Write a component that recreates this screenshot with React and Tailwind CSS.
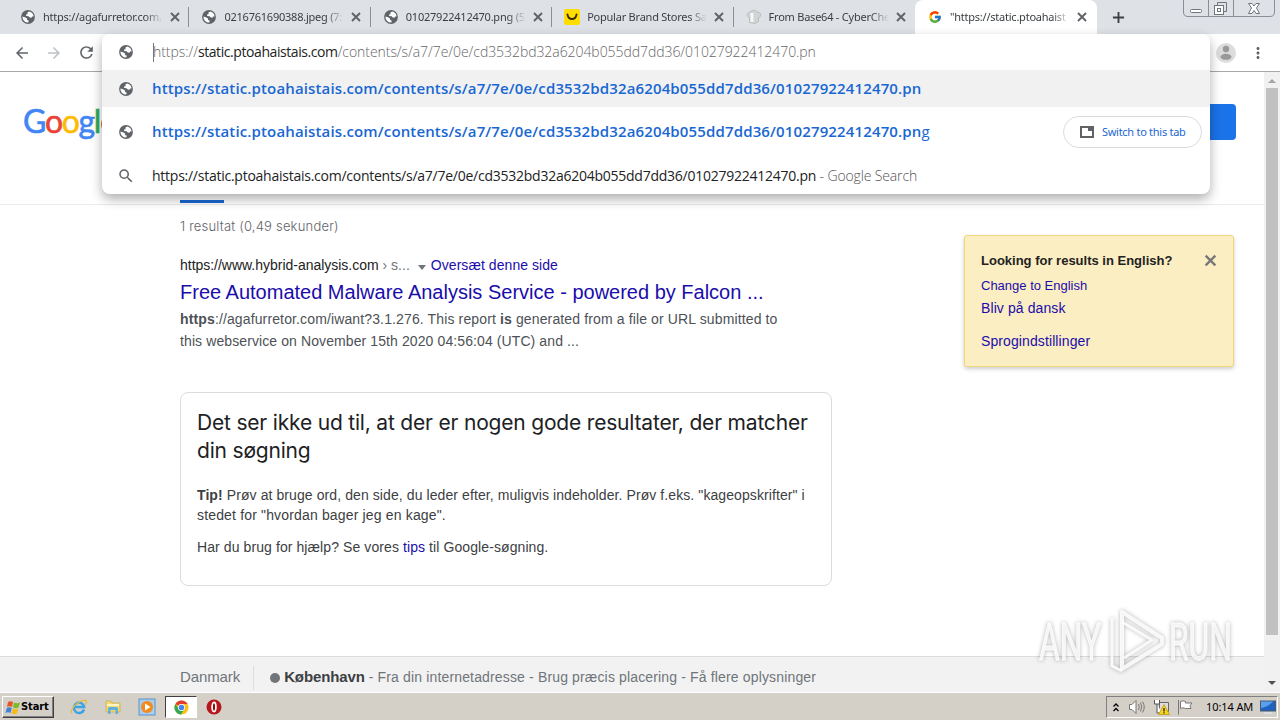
import React from 'react';
import { MdArrowBack, MdArrowForward, MdRefresh, MdSearch, MdMoreVert } from 'react-icons/md';
import { FcGoogle } from 'react-icons/fc';

const URL_HOST = 'static.ptoahaistais.com';
const URL_PATH = '/contents/s/a7/7e/0e/cd3532bd32a6204b055dd7dd36/01027922412470.pn';

const GlobeIcon = ({ className }) => (
  <svg viewBox="0 0 14 14" className={className}>
    <circle cx="7" cy="7" r="6.9" fill="#5f6368" />
    <path d="M8.2 1.4 L6.4 2.6 6.6 4.2 5 4.6 5.2 6 7.6 6.2 8.8 7.6 10.6 7.8 11 6.4 12.6 6.6 A5.7 5.7 0 0 0 8.2 1.4Z M1.4 6.6 L4.6 7.4 6.2 8.8 6 10 7.6 10.4 7.4 12.6 A5.7 5.7 0 0 1 1.4 6.6Z" fill="#fff" />
  </svg>
);

const CrossIcon = ({ className }) => (
  <svg viewBox="0 0 14 14" className={className} fill="none" stroke="currentColor" strokeWidth="1.9">
    <path d="M3 3 L11 11 M11 3 L3 11" />
  </svg>
);

const PlusIcon = ({ className }) => (
  <svg viewBox="0 0 14 14" className={className} fill="none" stroke="currentColor" strokeWidth="2">
    <path d="M7 1 V13 M1 7 H13" />
  </svg>
);

const AliIcon = () => (
  <svg viewBox="0 0 16 16" className="w-4 h-4">
    <rect width="16" height="16" rx="2" fill="#fd0" />
    <path d="M3.5 5.5 C4.5 11.5 11.5 11.5 12.5 5.5" fill="none" stroke="#3a2a00" strokeWidth="1.8" strokeLinecap="round" />
  </svg>
);

const ChefIcon = () => (
  <svg viewBox="0 0 16 16" className="w-4 h-4">
    <path d="M3.5 13.5 V8.5 C0 8 .5 3 4 3.2 C5.5 .8 10 .8 11 3 C15.5 2.5 15.8 8 12.5 8.8 V12.5 L9 14.5Z" fill="#d2d3d5" stroke="#b5b5b5" strokeWidth=".8" />
    <path d="M6 4 V13" stroke="#f7f7f7" strokeWidth="3" />
  </svg>
);

const tabs = [
  { title: 'https://agafurretor.com,', icon: <GlobeIcon className="w-3.5 h-3.5" /> },
  { title: '0216761690388.jpeg (7:', icon: <GlobeIcon className="w-3.5 h-3.5" /> },
  { title: '01027922412470.png (5', icon: <GlobeIcon className="w-3.5 h-3.5" /> },
  { title: 'Popular Brand Stores Sa', icon: <AliIcon /> },
  { title: 'From Base64 - CyberChe', icon: <ChefIcon /> },
  { title: '"https://static.ptoahaist', icon: <FcGoogle className="w-3.5 h-3.5" />, active: true },
];

const Tab = ({ tab, last }) => (
  <div className={tab.active
    ? 'flex h-[34px] w-[182px] items-center rounded-t-lg bg-white pl-3'
    : 'flex h-[34px] w-[181.4px] items-center pl-3'}>
    <span className="flex w-4 shrink-0 justify-center">{tab.icon}</span>
    <span className="ml-[7px] w-[120px] overflow-hidden whitespace-nowrap text-[11px] leading-4 tracking-[-0.23px] text-[#3c4043] mask-r-from-85%">
      {tab.title}
    </span>
    <CrossIcon className="ml-[5px] h-3.5 w-3.5 shrink-0 text-[#5f6368]" />
    {!tab.active && !last && <span className="ml-auto h-[20px] w-px bg-[#8b8e93]" />}
  </div>
);

const WindowButtons = () => (
  <svg viewBox="0 0 94 18" className="ml-auto mr-1 h-[18px] w-[94px] self-start" fill="none" stroke="#8b8f95">
    <path d="M1.5 -1 V12 Q1.5 16.500 6 16.500 H88 Q92.500 16.500 92.500 12 V-1 M26.500 0 V16 M51.500 0 V16" />
    <rect x="8.500" y="9.500" width="11" height="3" rx="1" fill="#fff" stroke="#70757a" />
    <path d="M35.500 5.500 V2.500 H44.500 V11.500 H41.500" stroke="#70757a" />
    <rect x="32.500" y="5.500" width="9" height="9" stroke="#70757a" fill="#fff" />
    <rect x="35.500" y="8.500" width="3" height="3" stroke="#70757a" />
    <path d="M66.500 3.500 H70 L72 6 74 3.500 H77.500 L74.500 8 77.500 13.500 H74 L72 10.500 70 13.500 H66.500 L69.500 8Z" stroke="#70757a" fill="#fff" />
  </svg>
);

const Omnibox = () => (
  <div className="absolute left-[102px] top-[34px] z-10 h-[160px] w-[1108px] rounded-lg bg-white font-['Open_Sans',sans-serif] text-[14px] shadow-[0_5px_12px_rgba(0,0,0,0.32)]">
    <div className="flex h-9 items-center pl-[17px]">
      <GlobeIcon className="h-3.5 w-3.5" />
      <span className="ml-[20px] h-[19px] w-px bg-[#777]" />
      <span className="-ml-px mb-[2px] whitespace-nowrap font-light tracking-[-0.06px] text-[#666]">
        https://<span className="font-normal tracking-[-0.42px] text-[#222]">{URL_HOST}</span>{URL_PATH}
      </span>
    </div>
    <div className="flex h-[37px] items-center bg-[#f1f1f1] pl-[17px]">
      <GlobeIcon className="h-3.5 w-3.5" />
      <span className="ml-[19px] whitespace-nowrap text-[15px] font-semibold tracking-[0.14px] text-[#1967d2]">https://{URL_HOST}{URL_PATH}</span>
    </div>
    <div className="flex h-[50px] items-center pl-[17px] pr-[8px]">
      <GlobeIcon className="h-3.5 w-3.5" />
      <span className="mb-px ml-[19px] whitespace-nowrap text-[15px] font-semibold tracking-[0.14px] text-[#1967d2]">
        https://{URL_HOST}{URL_PATH}<span className="font-normal">g</span>
      </span>
      <button className="ml-auto flex h-8 w-[139px] items-center rounded-full border border-[#dadce0] pl-4 font-['Noto_Sans',sans-serif] text-[11px] text-[#1967d2]">
        <svg viewBox="0 0 14 12" className="mr-2 h-3 w-3.5">
          <path d="M1 1 H13 V11 H1Z" fill="none" stroke="#5f6368" strokeWidth="2" />
          <path d="M8 1 H13 V5 H8Z" fill="#5f6368" />
        </svg>
        <span className="whitespace-nowrap tracking-[-0.28px]">Switch to this tab</span>
      </button>
    </div>
    <div className="flex h-[37px] items-center pl-[15px]">
      <MdSearch className="h-[18px] w-[18px] text-[#5f6368]" />
      <span className="ml-[17px] whitespace-nowrap tracking-[-0.25px] text-[#222]">
        https://{URL_HOST}{URL_PATH}<span className="font-light tracking-[-0.14px] text-[#555]"> - Google Search</span>
      </span>
    </div>
  </div>
);

const LanguageBox = () => (
  <aside className="mr-[30px] mt-[30px] h-[132px] w-[270px] rounded-[3px] border border-[#f0d87a] bg-[#fceec3] px-4 pt-[15px] text-[14px] text-[#1a0dab] shadow-[0_2px_4px_rgba(0,0,0,0.2)]">
    <div className="flex h-[20px] items-center justify-between">
      <b className="whitespace-nowrap text-[13px] text-[#222]">Looking for results in English?</b>
      <CrossIcon className="-mr-[2px] mb-[2px] h-[17px] w-[17px] text-[#777]" />
    </div>
    <p className="mt-[3px] text-[13px] leading-[23px]">Change to English</p>
    <p className="leading-[23px] tracking-[0.1px]">Bliv på dansk</p>
    <p className="mt-[10px] leading-[23px] tracking-[0.1px]">Sprogindstillinger</p>
  </aside>
);

const Results = () => (
  <div className="w-[652px] pt-[11px]">
    <p className="font-['Inter',sans-serif] text-[13px] font-light leading-5 tracking-[0.2px] text-[#5f6368]">1 resultat (0,49 sekunder)</p>
    <p className="mt-[19px] flex items-center whitespace-nowrap text-[14px] leading-5 text-[#222]">
      <span className="tracking-[-0.02px]">https://www.hybrid-analysis.com</span>
      <span className="ml-1 text-[#70757a]">› s...</span>
      <span className="ml-2 mt-1 border-x-4 border-t-[5px] border-x-transparent border-t-[#70757a]" />
      <span className="ml-[5px] tracking-[0.06px] text-[#1a0dab]">Oversæt denne side</span>
    </p>
    <h3 className="mt-1 whitespace-nowrap text-[20px] leading-[26px] text-[#1a0dab]">
      Free Automated Malware Analysis Service - powered by Falcon ...
    </h3>
    <p className="mt-[3px] whitespace-nowrap text-[14px] leading-[22px] tracking-[0.13px] text-[#4d5156]">
      <b>https</b>://agafurretor.com/iwant?3.1.276. This report <b>is</b> generated from a file or URL submitted to<br />
      <span className="tracking-[0.1px]">this webservice on November 15th 2020 04:56:04 (UTC) and ...</span>
    </p>
    <div className="mt-10 h-[194px] rounded-lg border border-[#dadce0] p-4 text-[14px] leading-5 text-[#3c4043]">
      <h2 className="whitespace-nowrap font-['Inter',sans-serif] text-[21px] leading-7 tracking-[-0.19px] text-[#202124]">
        Det ser ikke ud til, at der er nogen gode resultater, der matcher<br />din søgning
      </h2>
      <p className="mt-5 whitespace-nowrap tracking-[0.09px]">
        <b>Tip!</b> Prøv at bruge ord, den side, du leder efter, muligvis indeholder. Prøv f.eks. "kageopskrifter" i<br />
        <span className="tracking-[0.16px]">stedet for "hvordan bager jeg en kage".</span>
      </p>
      <p className="mt-3 whitespace-nowrap tracking-[0.09px]">Har du brug for hjælp? Se vores <span className="text-[#1a0dab]">tips</span> til Google-søgning.</p>
    </div>
  </div>
);

const Scrollbar = () => (
  <div className="flex w-4 flex-col items-center bg-[#f1f1f1]">
    <span className="mt-[7px] border-x-4 border-b-[4px] border-x-transparent border-b-[#a3a3a3]" />
    <span className="mt-[5px] h-[547px] w-3 bg-[#c1c1c1]" />
    <span className="mb-[7px] mt-auto border-x-4 border-t-[4px] border-x-transparent border-t-[#505050]" />
  </div>
);

const Watermark = () => (
  <svg viewBox="0 0 200 72" className="absolute left-[1036px] top-[606px] z-10 h-[72px] w-[200px] overflow-visible drop-shadow-[0_0_2px_rgba(0,0,0,0.35)]">
    <g fill="#fff" fillOpacity=".8" stroke="#fff" strokeOpacity=".8" strokeWidth="1" fontFamily="Roboto, sans-serif" fontSize="51">
      <text x="3" y="54" textLength="62" lengthAdjust="spacingAndGlyphs">ANY</text>
      <text x="133" y="54" textLength="63" lengthAdjust="spacingAndGlyphs">RUN</text>
    </g>
    <g fill="none" stroke="#fff" strokeOpacity=".85" strokeWidth="4" strokeLinejoin="round">
      <path d="M86 6 L126 32 V38 L86 63Z" />
      <path d="M76 12 V60 L86 65 M86 16 L116 34 L88 52" strokeWidth="3" />
    </g>
  </svg>
);

const ChromeIcon = () => (
  <svg viewBox="0 0 16 16" className="h-[15px] w-[15px]">
    <circle cx="8" cy="8" r="7.500" fill="#fbc116" />
    <path d="M8 8 L1.500 4.200 A7.500 7.500 0 0 1 14.500 4.200 H8Z" fill="#e33b2e" />
    <path d="M1.500 4.200 A7.500 7.500 0 0 0 7.500 15.500 L11 9.500 8 8 5 9.500Z" fill="#34a853" />
    <circle cx="8" cy="8" r="3.700" fill="#fff" />
    <circle cx="8" cy="8" r="2.900" fill="#4285f4" />
  </svg>
);

const Taskbar = () => (
  <footer className="flex h-[28px] items-center border-t border-white bg-[#d4d0c8] pl-[2px] pr-[2px] pt-px">
    <button className="flex h-[22px] w-[52px] items-center border border-b-[#404040] border-l-white border-r-[#404040] border-t-white pl-[2px] shadow-[inset_-1px_-1px_0_#808080]">
      <svg viewBox="0 0 16 15" className="h-[15px] w-4 shrink-0">
        <path d="M3 2 Q5.500 .5 8 2 L7 7 Q4.500 5.500 2 7Z" fill="#e8542a" />
        <path d="M9 2.500 Q12 4 15 2.500 L13.500 7.500 Q11 9 8 7.500Z" fill="#7db928" />
        <path d="M1.800 8 Q4.500 6.500 6.800 8 L5.500 13 Q3 11.500 .5 13Z" fill="#3f83d6" />
        <path d="M7.800 8.500 Q10.500 10 13.200 8.500 L12 13.500 Q9 15 6.500 13.500Z" fill="#f7b91c" />
      </svg>
      <b className="font-['DejaVu_Sans_Condensed','DejaVu_Sans',sans-serif] text-[11px] tracking-[-0.1px] text-black">Start</b>
    </button>
    <svg viewBox="0 0 18 18" className="ml-[16px] h-[18px] w-[18px]" fill="none">
      <path d="M14 11.500 A5.200 5.200 0 1 1 14.200 9 H5" stroke="#3ba4e6" strokeWidth="2.500" />
      <path d="M2 15.500 C-1 12 9 1 16 2.500 C17.500 3.500 15.500 6 15 6.500" stroke="#e9bb3b" strokeWidth="1.300" />
    </svg>
    <svg viewBox="0 0 18 18" className="ml-4 h-[18px] w-[18px]">
      <path d="M2 3 H7 L8 5 H16 V14 H2Z" fill="#f1d775" stroke="#c9a948" strokeWidth=".7" />
      <path d="M3 7 H15" stroke="#fff5c5" strokeWidth="2" />
      <path d="M4 16 V10.500 Q4 9 6 9 H12 Q14 9 14 10.500 V16 H11.500 V12 H6.500 V16Z" fill="#5fb0dc" />
    </svg>
    <svg viewBox="0 0 18 18" className="ml-4 h-[18px] w-[18px]">
      <rect x="1" y="1" width="16" height="16" fill="#a9cdee" stroke="#5a94c8" />
      <circle cx="9" cy="9" r="6" fill="#f38a1c" />
      <path d="M7 5.500 L12.500 9 7 12.500Z" fill="#fff" />
    </svg>
    <span className="ml-[9px] flex h-[22px] w-[32px] items-center justify-center border border-b-white border-l-[#404040] border-r-white border-t-[#404040] bg-white">
      <ChromeIcon />
    </span>
    <svg viewBox="0 0 16 16" className="ml-[9px] h-4 w-4">
      <circle cx="8" cy="8" r="7.500" fill="#b5161b" />
      <ellipse cx="8" cy="8" rx="1.900" ry="4.600" fill="#8a0d12" stroke="#fff" strokeWidth="1.700" />
    </svg>
    <div className="ml-auto flex h-[22px] w-[172px] items-center border border-b-white border-l-[#808080] border-r-white border-t-[#808080] pl-[6px]">
      <svg viewBox="0 0 6 9" className="h-[9px] w-[6px]" fill="none" stroke="#000" strokeWidth="1.300">
        <path d="M.5 3.500 L3 1 5.500 3.500 M.5 8 L3 5.500 5.500 8" />
      </svg>
      <svg viewBox="0 0 18 16" className="ml-[9px] h-4 w-[18px]" fill="none" stroke="#777">
        <path d="M1.500 5.500 H4 L8 1.500 V14.500 L4 10.500 H1.500Z" fill="#fff" />
        <path d="M10.500 5 Q12 8 10.500 11 M12.500 3.500 Q15 8 12.500 12.500 M14.500 2.500 Q18 8 14.500 13.500" />
      </svg>
      <svg viewBox="0 0 17 16" className="ml-[7px] h-4 w-[17px]">
        <path d="M6.500 3.500 H15.500 V12.500 H6.500Z" fill="#ddd" stroke="#666" />
        <path d="M1.500 1 V5 H6.500 V1 M4 5 V14 H9" fill="#fff" stroke="#555" />
        <path d="M11 5.500 L16.500 15.500 H5.500Z" fill="#f8d51c" stroke="#b79208" strokeWidth=".7" />
        <path d="M11 9 V12.500 M11 13.300 V14.500" stroke="#222" strokeWidth="1.300" />
      </svg>
      <svg viewBox="0 0 16 16" className="ml-[7px] h-4 w-4" fill="#fff" stroke="#777">
        <path d="M1.500 1 V15.500 M3.500 2.500 Q6 1 8.500 2.500 V4 H15 L13 6.500 14 9.500 H8.500 Q6 8 3.500 9.500Z" />
      </svg>
      <span className="ml-[13px] whitespace-nowrap font-['Noto_Sans',sans-serif] text-[11px] tracking-[-0.1px] text-black">10:14 AM</span>
      <svg viewBox="0 0 16 14" className="ml-[7px] h-3.5 w-4">
        <rect x=".5" y="1" width="15" height="10" fill="#1f62c0" stroke="#4a5a70" />
        <path d="M1 8 Q8 7 13 1.500 H1Z" fill="#5aa0ea" />
        <path d="M4 13 H12" stroke="#dfe6ee" strokeWidth="1.500" />
      </svg>
    </div>
  </footer>
);

export default function App() {
  return (
    <div className="relative flex h-[720px] w-[1280px] flex-col overflow-hidden bg-white font-['Liberation_Sans',Arial,sans-serif]">
      <div className="flex h-[34px] items-center bg-[#dee1e6] pl-[8px] font-['Noto_Sans',sans-serif]">
        {tabs.map((tab, i) => <Tab key={tab.title} tab={tab} last={i === tabs.length - 2} />)}
        <PlusIcon className="ml-[15px] h-[13px] w-[13px] text-[#3c4043]" />
        <WindowButtons />
      </div>
      <div className="flex h-[38px] items-center border-b border-[#a8a8a8] pl-[13px] text-[#5f6368]">
        <MdArrowBack className="h-[18px] w-[18px]" />
        <MdArrowForward className="ml-[14px] h-[18px] w-[18px] text-[#bdc1c6]" />
        <MdRefresh className="ml-[14px] h-[19px] w-[19px]" />
        <svg viewBox="0 0 20 20" className="ml-auto h-5 w-5">
          <circle cx="10" cy="10" r="10" fill="#dcdcdc" />
          <circle cx="10" cy="6" r="3.200" fill="#999" />
          <ellipse cx="10" cy="13.800" rx="5.500" ry="3" fill="#999" />
        </svg>
        <MdMoreVert className="ml-[13px] mr-[13px] h-[18px] w-[18px]" />
      </div>

      <div className="flex h-[620px]">
        <div className="flex grow flex-col">
          <header className="flex h-[133px] flex-col border-b border-[#ebebeb]">
            <div className="flex h-[128px] items-start justify-between pl-[23px] pr-[28px] pt-8">
              <span className="-mt-[5px] font-['Lato',sans-serif] text-[32px] leading-[44px] tracking-[-1.3px] text-[#4285f4] [-webkit-text-stroke:0.6px]">
                G<span className="text-[#ea4335]">o</span><span className="text-[#fbbc05]">o</span>g<span className="text-[#34a853]">l</span><span className="text-[#ea4335]">e</span>
              </span>
              <span className="h-9 w-11 rounded bg-[#1a73e8]" />
            </div>
            <span className="ml-[180px] h-[3px] w-11 bg-[#1967d2]" />
          </header>
          <main className="flex h-[451px] justify-between pl-[180px]">
            <Results />
            <LanguageBox />
          </main>
          <div className="flex grow items-center border-t border-[#dadce0] bg-[#f2f2f2] pl-[180px] pt-[6px] text-[15px] text-[#70757a]">
            <span className="tracking-[-0.1px]">Danmark</span>
            <span className="ml-[13px] h-6 w-px bg-[#dadce0]" />
            <span className="ml-[16px] h-[10px] w-[10px] rounded-full bg-[#70757a]" />
            <b className="ml-1 tracking-[-0.12px] text-[#3c4043]">København</b>
            <span className="ml-[4px] whitespace-nowrap text-[14px] tracking-[0.15px]">- Fra din internetadresse - Brug præcis placering - Få flere oplysninger</span>
          </div>
        </div>
        <Scrollbar />
      </div>
      <Taskbar />
      <Omnibox />
      <Watermark />
    </div>
  );
}
